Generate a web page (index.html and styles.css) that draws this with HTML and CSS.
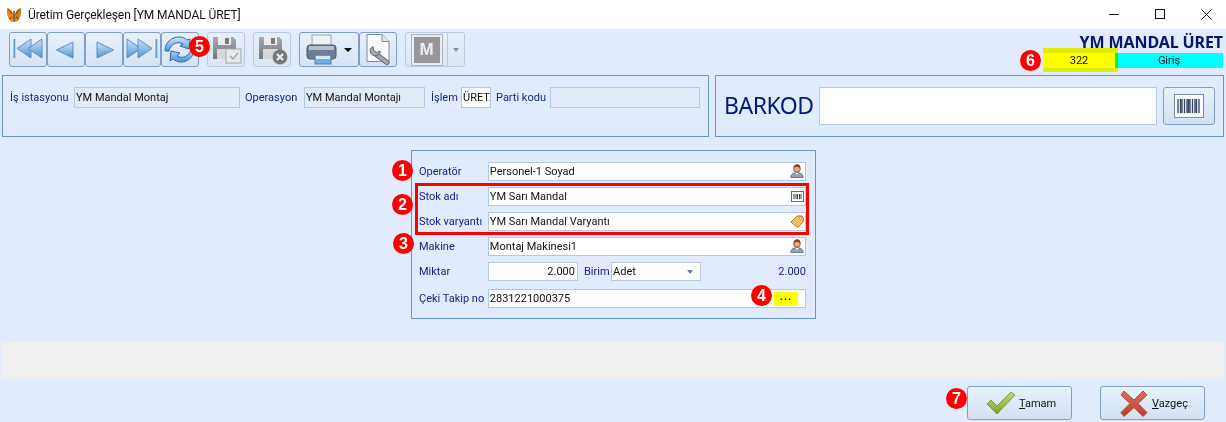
FILE: index.html
```html
<!DOCTYPE html>
<html lang="tr">
<head>
<meta charset="utf-8">
<title>Üretim Gerçekleşen</title>
<link rel="stylesheet" href="styles.css">
</head>
<body>
<svg class="defs" width="0" height="0">
  <defs>
    <linearGradient id="nav" x1="0" y1="0" x2="0" y2="1"><stop offset="0" stop-color="#cfe3f6"/><stop offset=".5" stop-color="#8fbde6"/><stop offset="1" stop-color="#4f93d0"/></linearGradient>
    <linearGradient id="floppy" x1="0" y1="0" x2="0" y2="1"><stop offset="0" stop-color="#a9a9ad"/><stop offset="1" stop-color="#77787c"/></linearGradient>
    <linearGradient id="green" x1="0" y1="0" x2="0" y2="1"><stop offset="0" stop-color="#c5dc6c"/><stop offset="1" stop-color="#7da22e"/></linearGradient>
    <linearGradient id="red" x1="0" y1="0" x2="0" y2="1"><stop offset="0" stop-color="#e0705c"/><stop offset="1" stop-color="#b83c2c"/></linearGradient>
    <symbol id="person" viewBox="0 0 14 14">
      <path d="M.8 13.500c0-3.500 2.700-4.700 6.200-4.700s6.200 1.200 6.200 4.700z" fill="#8fa4ba" stroke="#4f6074" stroke-width=".8"/>
      <path d="M5.500 9l1.500 2 1.500-2z" fill="#fff"/>
      <circle cx="7" cy="5" r="3.300" fill="#e3a97a" stroke="#6e4020" stroke-width=".7"/>
      <path d="M3.600 5c-.3-3.300 1.800-4.700 3.700-4.700s3.400 1.500 3.100 4.200c-1-1.300-2.400-1.900-3.600-1.800-1.100.1-2.400.8-3.200 2.300z" fill="#7d4419"/>
    </symbol>
  </defs>
</svg>

<div class="window">
  <header class="titlebar">
    <svg class="app-icon" width="16" height="16" viewBox="0 0 16 16"><path d="M7.500 8C6 3.500 3.500 1.500 1 1c-.5 4 .2 8 2 11 1.200 2 3 3 4 2.500.4-2 .5-4.500.5-6.500z" fill="#e8871e"/><path d="M8.500 8C10 3.500 12.500 1.500 15 1c.5 4-.2 8-2 11-1.200 2-3 3-4 2.500-.4-2-.5-4.500-.5-6.500z" fill="#d9780f"/><path d="M2 2c1.500 1 3 2.500 4 5M14 2c-1.500 1-3 2.500-4 5M3 12l3-2M13 12l-3-2" stroke="#6b3a10" stroke-width="1" fill="none"/><path d="M8 4v11" stroke="#3b2410" stroke-width="1.200"/></svg>
    <span class="title">Üretim Gerçekleşen [YM MANDAL ÜRET]</span>
    <div class="win-controls">
      <svg width="13" height="13" viewBox="0 0 13 13"><path d="M1 6.500h10" stroke="#111" stroke-width="1"/></svg>
      <svg width="13" height="13" viewBox="0 0 13 13"><rect x="1.500" y="1.500" width="9" height="9" fill="none" stroke="#111"/></svg>
      <svg width="13" height="13" viewBox="0 0 13 13"><path d="M1.500 1.500l10 10M11.500 1.500l-10 10" stroke="#111" stroke-width="1"/></svg>
    </div>
  </header>

  <section class="toolbar">
    <div class="tb-group">
      <button class="tb-btn"><svg width="36" height="33" viewBox="0 0 36 33"><rect x="3.500" y="6" width="1.800" height="19" fill="#5f9cd4"/><path d="M7 15.500L21 6v19z" fill="url(#nav)" stroke="#5b8fc4"/><path d="M18 15.500L32 6v19z" fill="url(#nav)" stroke="#5b8fc4"/></svg></button>
      <button class="tb-btn"><svg width="36" height="33" viewBox="0 0 36 33"><path d="M8.500 17L25 9v16z" fill="url(#nav)" stroke="#5b8fc4"/></svg></button>
      <button class="tb-btn"><svg width="36" height="33" viewBox="0 0 36 33"><path d="M27.500 17L11 9v16z" fill="url(#nav)" stroke="#5b8fc4"/></svg></button>
      <button class="tb-btn"><svg width="36" height="33" viewBox="0 0 36 33"><path d="M3 15.500l14-9.500v19z" transform="matrix(-1 0 0 1 20 0)" fill="url(#nav)" stroke="#5b8fc4"/><path d="M3 15.500l14-9.500v19z" transform="matrix(-1 0 0 1 31 0)" fill="url(#nav)" stroke="#5b8fc4"/><rect x="31.500" y="6" width="1.800" height="19" fill="#5f9cd4"/></svg></button>
      <button class="tb-btn"><svg width="36" height="33" viewBox="0 0 36 33"><path d="M3 18C3 9 10 4 17 4c3 0 6 1 8 3l3-1-1 10-9-3 3-2c-5-3-12-1-14 7z" fill="url(#nav)" stroke="#2f6ca8"/><path d="M33 14c0 9-7 15-14 15-3 0-6-1-8-3l-3 2 1-10 9 2-3 3c5 3 13 1 15-9z" fill="url(#nav)" stroke="#2f6ca8"/></svg></button>
    </div>
    <button class="tb-btn disabled first-gap"><svg width="36" height="33" viewBox="0 0 36 33"><path d="M5 4h20l3 3v19H5z" fill="url(#floppy)"/><rect x="10" y="4" width="13" height="8" fill="#ececee"/><rect x="17" y="5" width="4" height="6" fill="#7a7b80"/><rect x="9" y="16" width="15" height="10" fill="#d6d7da"/><rect x="18" y="16" width="15" height="14" fill="#e8e9ec" stroke="#a4a6aa"/><path d="M22 23l3 3 5-6" fill="none" stroke="#a8aaae" stroke-width="1.500"/></svg></button>
    <button class="tb-btn disabled first-gap"><svg width="36" height="33" viewBox="0 0 36 33"><path d="M5 4h20l3 3v19H5z" fill="url(#floppy)"/><rect x="10" y="4" width="13" height="8" fill="#ececee"/><rect x="17" y="5" width="4" height="6" fill="#7a7b80"/><rect x="9" y="16" width="15" height="10" fill="#d6d7da"/><circle cx="26" cy="24" r="7.500" fill="#77787c"/><path d="M23 21l6 6M29 21l-6 6" stroke="#eee" stroke-width="2.200"/></svg></button>
    <button class="tb-btn print first-gap"><svg width="37" height="33" viewBox="0 0 37 33"><rect x="9" y="2" width="19" height="13" fill="#eef1f6" stroke="#9aa6b8"/><rect x="4" y="12" width="29" height="14" rx="3" fill="#6e7d95" stroke="#48556b"/><rect x="6" y="13" width="25" height="4" fill="#b5bfcd"/><rect x="12" y="22" width="16" height="9" fill="#6fb0e4" stroke="#5a7ea8"/><rect x="13" y="23" width="14" height="3" fill="#dbe8f5"/></svg><i class="caret dark"></i></button>
    <button class="tb-btn"><svg width="36" height="33" viewBox="0 0 36 33"><path d="M7 1.500h15l7 7v20H7z" fill="#f7f9fd" stroke="#7b8aa3"/><path d="M22 1.500v7h7" fill="#dfe5ef" stroke="#7b8aa3"/><path d="M17 22l10 7.500" stroke="#5e646c" stroke-width="5" stroke-linecap="round"/><path d="M17 22l10 7.500" stroke="#a4aab2" stroke-width="3.200" stroke-linecap="round"/><path d="M13 13.500c-2.500 1.200-3.500 4-2.300 6.500 1.300 2.500 4.500 3.500 7 2.200 1.700-.9 2.500-2.500 2.400-4l-3.500 1.200-3.200-2.300z" fill="#a4aab2" stroke="#5e646c"/></svg></button>
    <div class="split disabled first-gap">
      <span class="split-main"><b class="m-icon">M</b></span>
      <span class="split-arrow"><i class="caret grey"></i></span>
    </div>
    <div class="docinfo">
      <strong class="doc-title">YM MANDAL ÜRET</strong>
      <div class="doc-cells"><span class="cell-no">322</span><span class="cell-type">Giriş</span></div>
    </div>
  </section>

  <section class="top-row">
    <div class="panel station">
      <label class="lbl w-station">İş istasyonu</label><span class="field grey f1">YM Mandal Montaj</span>
      <label class="lbl w-op">Operasyon</label><span class="field grey f2">YM Mandal Montajı</span>
      <label class="lbl w-act">İşlem</label><span class="field white f3">ÜRET.</span>
      <label class="lbl w-lot">Parti kodu</label><span class="field grey f4"></span>
    </div>
    <div class="panel barcode">
      <span class="barcode-label">BARKOD</span>
      <span class="field white barcode-input"></span>
      <button class="barcode-btn">
        <span class="barcode-card"><svg width="24" height="14" viewBox="0 0 24 14"><path d="M1 0v14M3.500 0v14M5 0v14M7.500 0v14M10 0v14M11.500 0v14M13 0v14M15.500 0v14M18 0v14M19.500 0v14M22 0v14" stroke="#33415a" stroke-width="1.300"/></svg></span>
      </button>
    </div>
  </section>

  <section class="form">
    <div class="row"><label class="lbl">Operatör</label><div class="field white input">Personel-1 Soyad<svg class="fi" width="14" height="14"><use href="#person"/></svg></div></div>
    <div class="row"><label class="lbl">Stok adı</label><div class="field white input">YM Sarı Mandal<svg class="fi" width="13" height="11" viewBox="0 0 13 11"><rect x=".5" y=".5" width="12" height="10" fill="#fff" stroke="#5a6f99"/><path d="M3 3v5M5 3v5M6.500 3v5M8.500 3v5M10 3v5" stroke="#33415a"/></svg></div></div>
    <div class="row"><label class="lbl">Stok varyantı</label><div class="field white input">YM Sarı Mandal Varyantı<svg class="fi" width="14" height="13" viewBox="0 0 14 13"><path d="M1 7l6-6h5l1.500 2.500v3L7.500 12.500z" fill="#f0bf63" stroke="#a87c2e"/><circle cx="10.500" cy="3.500" r="1" fill="#fff" stroke="#8a6a28" stroke-width=".5"/></svg></div></div>
    <div class="row"><label class="lbl">Makine</label><div class="field white input">Montaj Makinesi1<svg class="fi" width="14" height="14"><use href="#person"/></svg></div></div>
    <div class="row qty">
      <label class="lbl">Miktar</label>
      <span class="field white qty-input">2.000</span>
      <label class="lbl unit-lbl">Birim</label>
      <span class="field white unit">Adet<i class="caret blue"></i></span>
      <span class="qty-total">2.000</span>
    </div>
    <div class="row last"><label class="lbl">Çeki Takip no</label><div class="field white input">2831221000375<span class="more">...</span></div></div>
  </section>

  <div class="status"></div>

  <footer class="footer">
    <button class="action"><svg width="30" height="24" viewBox="0 0 30 24"><path d="M1 13l4-4 6 6L25 1l4 3-18 19z" fill="url(#green)" stroke="#7d9b3a"/></svg><span><u>T</u>amam</span></button>
    <button class="action"><svg width="30" height="27" viewBox="0 0 28 27"><path d="M4 1l10 9 9-9 4 4-9 8.500 9 9-4 4-9-9-10 9-3-4 9-9-9-8.500z" fill="url(#red)" stroke="#a8503f"/></svg><span><u>V</u>azgeç</span></button>
  </footer>

  <div class="red-box"></div>
  <div class="marker"></div>
  <span class="badge b1">1</span>
  <span class="badge b2">2</span>
  <span class="badge b3">3</span>
  <span class="badge b4">4</span>
  <span class="badge b5">5</span>
  <span class="badge b6">6</span>
  <span class="badge b7">7</span>
</div>
</body>
</html>
```

FILE: styles.css
```css
* { box-sizing: border-box; }
html, body { margin: 0; padding: 0; }
body { font: 11px/1 Roboto, "Noto Sans", sans-serif; color: #111; }
.defs { position: absolute; }
button { font: inherit; color: inherit; padding: 0; margin: 0; }
.window { position: relative; width: 1226px; height: 422px; background: #e0ecfd; overflow: hidden; }

.titlebar { height: 29px; background: #fff; display: flex; align-items: center; padding-left: 6px; }
.app-icon { margin-right: 6px; }
.title { font-size: 12px; letter-spacing: -.08px; color: #111; }
.win-controls { margin-left: auto; display: flex; gap: 33px; padding-right: 13px; }

.toolbar { height: 46px; display: flex; align-items: flex-start; padding: 3px 3px 0 9px; }
.tb-group { display: flex; }
.tb-btn { width: 38px; height: 35px; border: 1px solid #7f9ec8; border-radius: 3px; background: linear-gradient(#e8f1fc, #d4e3f5); display: flex; align-items: center; justify-content: center; }
.tb-btn svg { display: block; }
.tb-btn.disabled, .split.disabled { border-color: #b9cbe2; background: linear-gradient(#e6effb, #dbe7f6); }
.first-gap { margin-left: 8px; }
.tb-btn.print { width: 60px; justify-content: flex-start; padding-left: 3px; gap: 4px; }
.split { width: 60px; height: 35px; border: 1px solid #b9cbe2; border-radius: 3px; display: flex; }
.split-main { width: 42px; display: flex; align-items: center; justify-content: center; border-right: 1px solid #b9cbe2; }
.split-arrow { flex: 1; display: flex; align-items: center; justify-content: center; }
.m-icon { width: 30px; height: 30px; background: #97979b; border: 2px solid #e9edf3; outline: 1px solid #b2b4b8; color: #eee; font: bold 17px/26px "Liberation Sans", sans-serif; text-align: center; }
.caret { display: inline-block; width: 0; height: 0; border-left: 4px solid transparent; border-right: 4px solid transparent; border-top: 4px solid #000; }
.caret.grey { border-top-color: #8b9098; border-left-width: 3px; border-right-width: 3px; }
.caret.blue { border-top-color: #5c80ad; margin-left: auto; margin-right: 7px; border-left-width: 3px; border-right-width: 3px; }

.docinfo { margin-left: auto; width: 180px; display: flex; flex-direction: column; align-items: stretch; padding-top: 3px; }
.doc-title { font: bold 16px/15px "Noto Sans", sans-serif; letter-spacing: -.1px; color: #04176c; text-align: right; white-space: nowrap; }
.doc-cells { display: flex; height: 15px; margin-top: 3px; }
.cell-no { width: 72px; background: #ffff00; text-align: center; line-height: 15px; color: #111; }
.cell-type { flex: 1; background: #00ffff; text-align: center; line-height: 15px; color: #111; }

.top-row { display: flex; padding-left: 2px; gap: 6px; }
.panel { height: 62px; border: 1px solid #6796d6; display: flex; }
.station { width: 707px; padding: 11px 0 0 7px; align-items: flex-start; }
.barcode { width: 509px; padding: 11px 0 0 8px; align-items: flex-start; }

.lbl { color: #17237f; white-space: nowrap; line-height: 21px; }
.field { display: flex; align-items: center; border: 1px solid #b3c8e4; padding-left: 1px; white-space: nowrap; overflow: hidden; color: #111; }
.field.grey { background: #e2ebf7; }
.field.white { background: #fff; }
.station .field { height: 21px; }
.w-station { width: 64px; }
.w-op { width: 59px; }
.w-act { width: 30px; }
.w-lot { width: 54px; }
.f1 { width: 166px; margin-right: 5px; }
.f2 { width: 121px; margin-right: 6px; }
.f3 { width: 30px; margin-right: 5px; }
.f4 { width: 150px; }
.barcode-label { width: 95px; font: 23px/37px "Noto Sans", sans-serif; letter-spacing: -.5px; color: #001a7c; }
.barcode-input { width: 338px; height: 38px; }
.barcode-btn { width: 52px; height: 38px; margin-left: 6px; border: 1px solid #7f9ec8; border-radius: 3px; background: linear-gradient(#e8f1fc, #d2e1f3); display: flex; align-items: center; justify-content: center; }
.barcode-card { width: 30px; height: 24px; background: #fbfcfe; border: 1px solid #7d8cab; display: flex; align-items: center; justify-content: center; }

.form { width: 405px; height: 169px; margin: 13px 0 0 411px; border: 1px solid #6796d6; padding: 11px 9px 0 7px; display: flex; flex-direction: column; gap: 7px; }
.row { display: flex; height: 18px; align-items: center; }
.row > .lbl:first-child { width: 69px; }
.input { width: 319px; height: 19px; position: relative; }
.fi { margin-left: auto; margin-right: 1px; }
.qty { height: 19px; }
.row.last { margin-top: 1px; height: 19px; }
.qty-input { width: 90px; height: 19px; justify-content: flex-end; padding-right: 2px; }
.unit-lbl { margin-left: 6px; width: 27px; }
.unit { width: 90px; height: 19px; }
.qty-total { margin-left: auto; color: #17237f; }
.more { margin-left: auto; margin-right: 7px; width: 24px; height: 14px; background: #ffff00; text-align: center; font-weight: bold; letter-spacing: 1px; line-height: 9px; color: #333; }

.status { height: 37px; margin: 23px 2px 0; background: #efefef; }
.footer { display: flex; justify-content: flex-end; gap: 28px; padding: 7px 21px 0 0; }
.action { width: 105px; height: 34px; border: 1px solid #7f9ec8; border-radius: 3px; background: linear-gradient(#e8f1fc, #d2e1f3); display: flex; align-items: center; padding-left: 18px; gap: 3px; color: #111; }

.red-box { position: absolute; left: 415px; top: 183px; width: 394px; height: 52px; border: 3px solid #f00; }
.marker { position: absolute; left: 1043px; top: 48px; width: 75px; height: 24px; background: #ffff00; mix-blend-mode: multiply; }
.badge { position: absolute; width: 21px; height: 21px; border-radius: 50%; background: #f00; color: #fff; font: bold 16px/21px "Liberation Sans", sans-serif; text-align: center; }
.b1 { left: 392px; top: 160px; }
.b2 { left: 392px; top: 194px; }
.b3 { left: 393px; top: 233px; }
.b4 { left: 751px; top: 285px; }
.b5 { left: 189px; top: 36px; }
.b6 { left: 1020px; top: 50px; }
.b7 { left: 946px; top: 388px; }
```
